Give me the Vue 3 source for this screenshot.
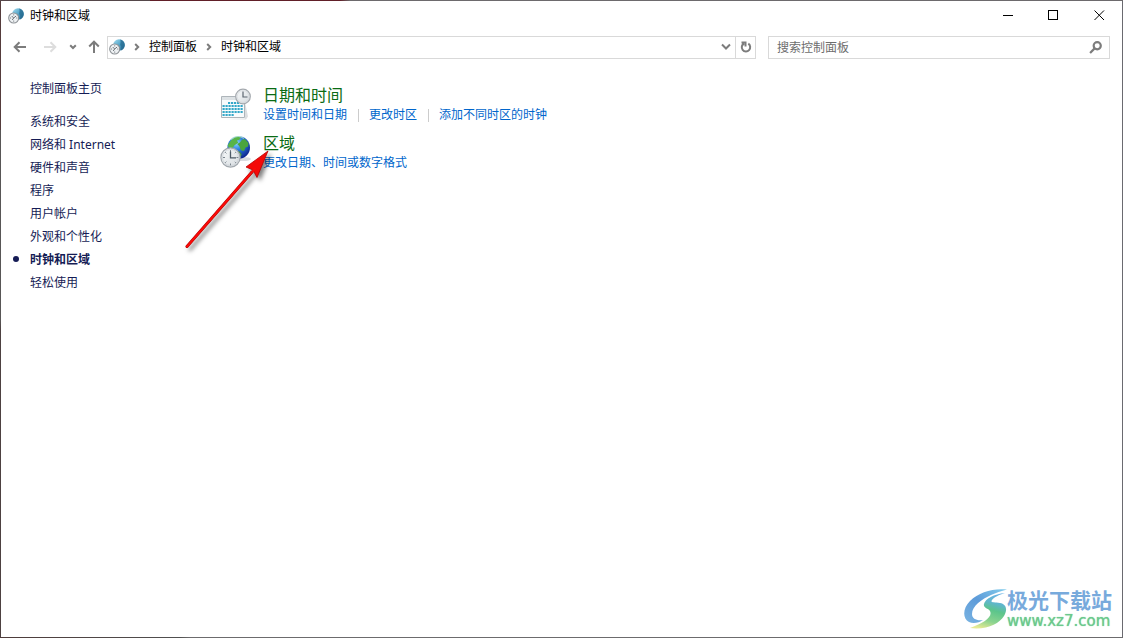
<script setup>
import { ref } from 'vue'

const query = ref('')
const categories = [
  { name: '系统和安全' },
  { name: '网络和 Internet' },
  { name: '硬件和声音' },
  { name: '程序' },
  { name: '用户帐户' },
  { name: '外观和个性化' },
  { name: '时钟和区域', current: true },
  { name: '轻松使用' },
]
const groups = [
  { icon: 'calendar', title: '日期和时间', links: ['设置时间和日期', '更改时区', '添加不同时区的时钟'] },
  { icon: 'globe', title: '区域', links: ['更改日期、时间或数字格式'] },
]
</script>

<template>
  <div class="frame">
    <svg class="defs" width="0" height="0" aria-hidden="true">
      <defs>
        <radialGradient id="ocean" cx=".4" cy=".3" r=".75">
          <stop offset="0" stop-color="#8fdcff" />
          <stop offset=".4" stop-color="#2d7fe0" />
          <stop offset="1" stop-color="#0a1c86" />
        </radialGradient>
        <linearGradient id="face" x1="0" y1="0" x2="1" y2="1">
          <stop offset="0" stop-color="#fafcfd" />
          <stop offset="1" stop-color="#d5dade" />
        </linearGradient>
        <linearGradient id="ball" x1="0" y1="0" x2="1" y2="1">
          <stop offset="0" stop-color="#a9e0f3" />
          <stop offset=".55" stop-color="#4b9fc4" />
          <stop offset="1" stop-color="#1d5f87" />
        </linearGradient>
        <symbol id="clock-globe" viewBox="0 0 16 16">
          <circle cx="10" cy="6" r="5.8" fill="url(#ball)" />
          <path d="M11 .4c3 .5 5 3 4.700 6.200-.3 2.500-1.700 4.300-3.700 5 .3-2.500.7-3.500-.5-5.100C10.600 5 12.500 3 11 .4Z" fill="#25698f" opacity=".75" />
          <circle cx="5.700" cy="10" r="5" fill="#eef1f3" stroke="#8c9196" stroke-width="1.100" />
          <path d="M5.700 6.400v1M5.700 12.600v1M2.100 10h1M8.300 10h1M3.700 8l2 2 2.400-2M5.700 10l-1.500 2" fill="none" stroke="#5c6369" stroke-width=".9" />
        </symbol>
      </defs>
    </svg>

    <div class="window">
      <header class="titlebar">
        <svg class="small-icon" viewBox="0 0 16 16"><use href="#clock-globe" /></svg>
        <h1>时钟和区域</h1>
        <div class="window-buttons">
          <button type="button" aria-label="最小化">
            <svg width="11" height="11" viewBox="0 0 11 11" shape-rendering="crispEdges"><path d="M1 5.500h10" /></svg>
          </button>
          <button type="button" aria-label="最大化">
            <svg width="11" height="11" viewBox="0 0 11 11" shape-rendering="crispEdges"><path d="M.5.5h9v9h-9z" /></svg>
          </button>
          <button type="button" aria-label="关闭">
            <svg width="11" height="11" viewBox="0 0 11 11"><path d="m.5.500 9.500 9.500m0-9.500-9.500 9.500" /></svg>
          </button>
        </div>
      </header>

      <nav class="toolbar" aria-label="导航">
        <div class="history">
          <button type="button" class="back" aria-label="后退">
            <svg width="14" height="12" viewBox="0 0 14 12"><path d="M13 6H2M6.500 1.200 1.700 6l4.800 4.800" /></svg>
          </button>
          <button type="button" class="forward" aria-label="前进" disabled>
            <svg width="14" height="12" viewBox="0 0 14 12"><path d="M1 6h11M7.500 1.200 12.300 6l-4.800 4.800" /></svg>
          </button>
          <button type="button" class="recent" aria-label="最近位置">
            <svg width="8" height="6" viewBox="0 0 8 6"><path d="m1.200 1.200 2.800 2.800 2.800-2.800" /></svg>
          </button>
          <button type="button" class="up" aria-label="向上">
            <svg width="12" height="14" viewBox="0 0 12 14"><path d="M6 13V2M1.200 6.500 6 1.700l4.800 4.800" /></svg>
          </button>
        </div>
        <div class="address">
          <svg class="small-icon" viewBox="0 0 16 16"><use href="#clock-globe" /></svg>
          <svg class="chevron" width="6" height="8" viewBox="0 0 6 8"><path d="m1.200 1 3 3-3 3" /></svg>
          <a href="#panel">控制面板</a>
          <svg class="chevron" width="6" height="8" viewBox="0 0 6 8"><path d="m1.200 1 3 3-3 3" /></svg>
          <a href="#clock">时钟和区域</a>
          <button type="button" class="expand" aria-label="以前的位置">
            <svg width="10" height="8" viewBox="0 0 10 8"><path d="M1 1.500 5 5.500l4-4" /></svg>
          </button>
          <button type="button" class="refresh" aria-label="刷新">
            <svg width="12" height="12" viewBox="0 0 12 12"><path d="M8.300 2.700A4.200 4.200 0 1 1 4 2.500M1.500 1.500h4v4" /></svg>
          </button>
        </div>
        <label class="search">
          <input v-model="query" type="text" placeholder="搜索控制面板" aria-label="搜索控制面板" />
          <svg width="13" height="13" viewBox="0 0 12 12"><circle cx="7.600" cy="4.400" r="3.300" /><path d="M5.200 6.800 1 11" /></svg>
        </label>
      </nav>

      <div class="body">
        <aside>
          <a class="home" href="#home">控制面板主页</a>
          <ul>
            <li v-for="item in categories" :key="item.name" :class="{ current: item.current }">
              <a href="#category">{{ item.name }}</a>
            </li>
          </ul>
        </aside>

        <main>
          <section v-for="group in groups" :key="group.title" class="group">
            <svg v-if="group.icon === 'calendar'" class="large-icon" viewBox="0 0 32 32">
              <path d="m5 31 20-.5V14l3 14.500-2 3Z" fill="#c4c8cb" opacity=".6" />
              <path d="M1.500 8.500h23v21h-23z" fill="#f8fbfc" stroke="#aeb5ba" />
              <path d="M2 9h22v3H2z" fill="#dde2e5" />
              <path d="M8 15h15M2.500 18h20.500M2.500 21h20.500M2.500 24h20.500M2.500 27h12" fill="none" stroke="#35a8c9" stroke-width="2.200" stroke-dasharray="2.200 .8" />
              <circle cx="23" cy="8.500" r="7.300" fill="url(#face)" stroke="#a4a9ae" stroke-width="1.200" />
              <circle cx="23" cy="8.500" r="5.900" fill="none" stroke="#d3d7db" stroke-width=".7" />
              <path d="M23 3.500v5.500h4.500" fill="none" stroke="#5c6670" stroke-width="1.200" />
            </svg>
            <svg v-else class="large-icon" viewBox="0 0 32 32">
              <ellipse cx="23" cy="23" rx="8" ry="2" fill="#bfc5cb" opacity=".6" />
              <circle cx="18.700" cy="11.500" r="11.300" fill="url(#ocean)" />
              <path d="M9.500 6.500C12 2.500 15 .8 18 .4l3 1.200-1.700 2.200-2.300.7 1.200 2.200-3.700 2.600-2.200 3.200-3.600-.8-1-2.400Z" fill="#58b447" />
              <path d="m22 3.800 3-.8 3.500 4-.4 3.500-2.600 1-1.500 3.400-3-.6-1.600-4-2.100-2.300 2.600-1.600Z" fill="#4aa43e" />
              <path d="M16 14.500l4 1.200 1.800 3-2.300 3.200h-3Z" fill="#3b963b" />
              <path d="M11 3.500c4-3.500 9-3.800 13-1" fill="none" stroke="#c9f1d1" stroke-width="1.300" opacity=".65" />
              <circle cx="10.500" cy="21.500" r="9.600" fill="url(#face)" stroke="#a3a9af" stroke-width="1.200" />
              <circle cx="10.500" cy="21.500" r="8" fill="none" stroke="#c6ccd1" stroke-width=".7" />
              <path d="M10.500 14v2M10.500 27.500v1.800M3 21.500h2M16.500 21.500h1.800M5.200 16.200l1.200 1.200M15.800 16.200l-1 1M5.200 26.800l1.200-1.200M15.800 26.800l-1-1" stroke="#7b858d" />
              <path d="M10.500 15.500v6.300h5.500" fill="none" stroke="#4d5a66" stroke-width="1.300" />
            </svg>
            <div>
              <h2><a href="#group">{{ group.title }}</a></h2>
              <ul class="tasks">
                <li v-for="link in group.links" :key="link"><a href="#task">{{ link }}</a></li>
              </ul>
            </div>
          </section>
        </main>
      </div>
    </div>

    <svg class="arrow" width="104" height="110" viewBox="0 0 104 110" aria-hidden="true">
      <path d="M7 97.500 72 23" stroke="#a00000" stroke-width="3" stroke-linecap="round" />
      <path d="M88 2 66 18l7 3 4 7.500Z" fill="#f40a08" stroke="#b80000" stroke-width=".8" />
      <path d="M7 97.500 75 19.500" stroke="#fa0a08" stroke-width="2.200" stroke-linecap="round" />
    </svg>

    <div class="watermark">
      <svg width="44" height="42" viewBox="4 3 44 42" aria-hidden="true">
        <defs>
          <linearGradient id="wave-blue" x1="1" y1="0" x2="0" y2="1">
            <stop offset="0" stop-color="#83cdec" />
            <stop offset=".5" stop-color="#5d9bd9" />
            <stop offset="1" stop-color="#7ab4e2" />
          </linearGradient>
          <linearGradient id="wave-mix" gradientUnits="userSpaceOnUse" x1="34" y1="8" x2="24" y2="44">
            <stop offset="0" stop-color="#6cb4e4" />
            <stop offset=".25" stop-color="#5fb6cc" />
            <stop offset=".45" stop-color="#5cc58b" />
            <stop offset=".75" stop-color="#8ad38f" />
            <stop offset="1" stop-color="#e6ea94" />
          </linearGradient>
        </defs>
        <path d="M48 4.500C34 3 20 7 11 16 4 23 3 33 10 37c4 2 10 1 14-2-6 1-11-1-11-6 0-8 10-15 19-19 5-2 10-4 16-5.500Z" fill="url(#wave-blue)" />
        <path d="M46 8c-11 1-20 6-21 11-1 4 4 4 6 7 3 6-6 12-20 17 17 2 29-4 34-12 4-7 2-12-4-13-6-1-10 0-8-3 2-3 7-5 13-7Z" fill="url(#wave-mix)" />
      </svg>
      <div>
        <p class="brand">极光下载站</p>
        <p class="site">www.xz7.com</p>
      </div>
    </div>
  </div>
</template>

<style>
body {
  margin: 0;
}
</style>

<style scoped>
.frame {
  position: relative;
  box-sizing: border-box;
  display: flex;
  min-height: 100vh;
  padding: 1px;
  background:
    linear-gradient(90deg, #55474a 150px, #611f28 150px 340px, #6d6a6d 350px) top / 100% 1px no-repeat,
    linear-gradient(90deg, #4e3c3b, #505050 180px, #6c6b6d 190px) bottom / 100% 1px no-repeat,
    linear-gradient(#553c3c 130px, #585656 130px 320px, #4d4141 330px) left / 1px 100% no-repeat,
    #6a6a70;
  font: 12px/18px "Noto Sans", "Noto Sans CJK SC", sans-serif;
  color: #000;
}
.defs,
.arrow,
.watermark {
  position: absolute;
}
.window {
  flex: 1;
  background: #fff;
}
button {
  display: flex;
  align-items: center;
  justify-content: center;
  padding: 0;
  border: 0;
  background: none;
}
a {
  color: inherit;
  text-decoration: none;
}
ul,
h1,
h2,
p {
  margin: 0;
  padding: 0;
  font: inherit;
  list-style: none;
}
.small-icon {
  width: 16px;
  height: 16px;
  flex: none;
}
.titlebar {
  display: flex;
  align-items: center;
  height: 29px;
  padding-left: 7px;
  gap: 6px;
}
.window-buttons {
  display: flex;
  margin-left: auto;
}
.window-buttons button {
  width: 46px;
  height: 29px;
}
.window-buttons path {
  fill: none;
  stroke: #000;
}
.toolbar {
  display: grid;
  grid-template-columns: 106px minmax(0, 649fr) minmax(0, 354fr);
  align-items: center;
  height: 34px;
  padding-right: 12px;
}
.toolbar button path,
.chevron path,
.search circle,
.search path {
  fill: none;
  stroke: #7c7c7c;
  stroke-width: 2;
}
.history {
  display: flex;
  align-items: center;
}
.history button {
  height: 24px;
}
.back {
  width: 38px;
}
.forward {
  width: 22px;
}
.history .forward path {
  stroke: #ddd;
}
.recent {
  width: 24px;
}
.up {
  width: 18px;
}
.address,
.search {
  box-sizing: border-box;
  display: flex;
  align-items: center;
  height: 23px;
  border: 1px solid #d9d9d9;
}
.address {
  padding-left: 1px;
}
.address a {
  margin: 0 9px;
}
.address .chevron {
  flex: none;
}
.address .small-icon + .chevron {
  margin-left: 9px;
}
.expand {
  width: 19px;
  height: 21px;
  margin-left: auto;
}
.refresh {
  width: 20px;
  height: 21px;
}
.address .refresh {
  border-left: 1px solid #d9d9d9;
}
.search {
  margin-left: 12px;
  padding: 0 7px 0 8px;
}
.search input {
  flex: 1;
  min-width: 0;
  padding: 1px 0 0;
  border: 0;
  outline: 0;
  background: none;
  font: inherit;
  color: #000;
}
.search input::placeholder {
  color: #6d6d6d;
  opacity: 1;
}
.body {
  display: flex;
  padding-top: 16px;
}
aside {
  width: 190px;
  flex: none;
  padding-left: 29px;
  color: #151c55;
}
.home {
  display: block;
  margin-bottom: 12px;
}
aside li {
  position: relative;
  line-height: 23px;
}
.current {
  font-weight: bold;
}
.current::before {
  content: "";
  position: absolute;
  top: 8px;
  left: -17px;
  width: 6px;
  height: 6px;
  border-radius: 50%;
  background: #151c55;
}
.group {
  display: flex;
  gap: 11px;
  height: 48px;
}
.large-icon {
  width: 32px;
  height: 32px;
  margin-top: 8px;
}
h2 {
  font-size: 16px;
  line-height: 21px;
  padding-top: 5px;
  color: #0a6b14;
}
.tasks {
  display: flex;
  color: #0066cc;
}
.tasks li {
  display: flex;
  align-items: center;
}
.tasks li + li::before {
  content: "";
  width: 1px;
  height: 13px;
  margin: 0 10px 0 11px;
  background: #ccc;
}
.arrow {
  top: 149px;
  left: 180px;
  fill: none;
  filter: drop-shadow(3px 3px 2px rgba(0, 0, 0, 0.5));
}
.watermark {
  right: 11px;
  bottom: 7px;
  display: flex;
  align-items: center;
}
.brand {
  font: bold 21px/24px "Noto Sans CJK SC", sans-serif;
  color: #78aadc;
}
.site {
  font: 15px/20px "DejaVu Sans", Verdana, sans-serif;
  color: #6cc98d;
  text-shadow: 0 0 1px #6cc98d;
}
</style>
